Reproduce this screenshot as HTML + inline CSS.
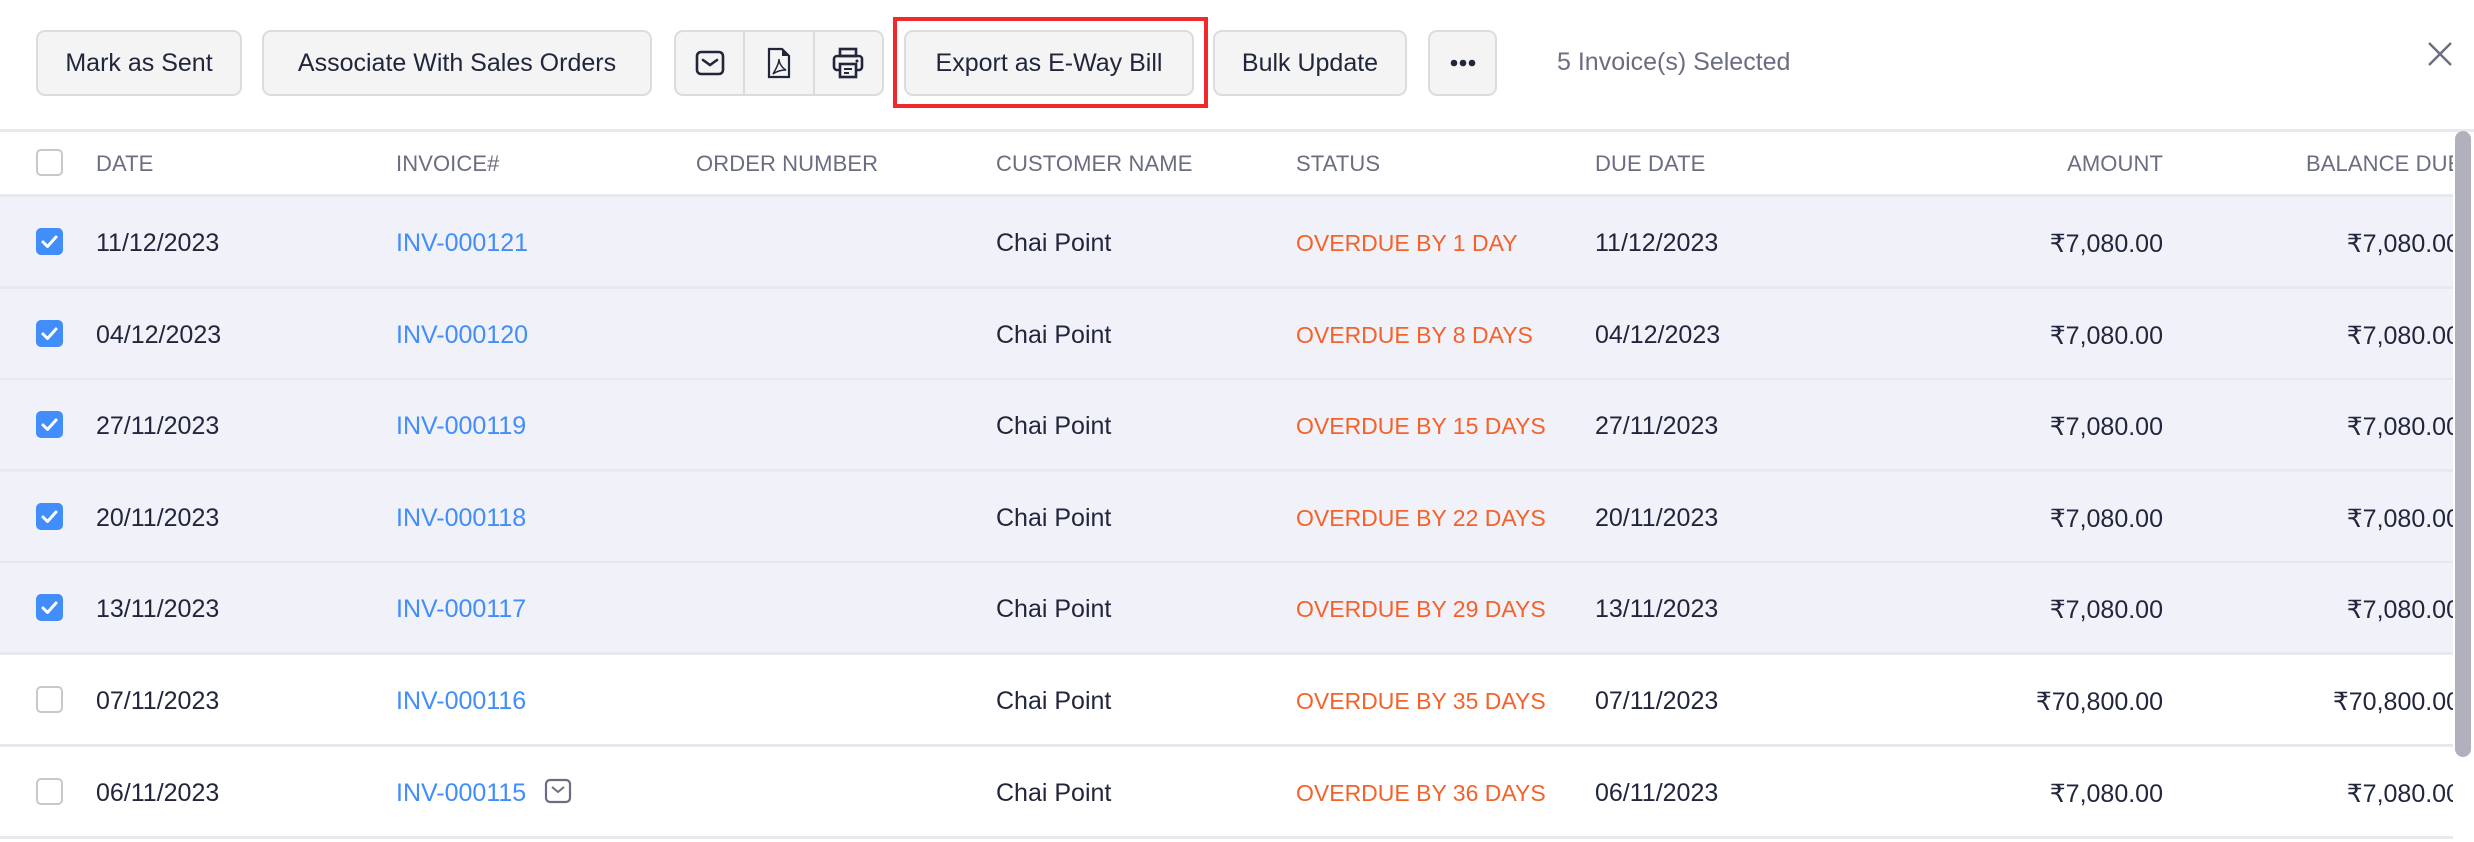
<!DOCTYPE html>
<html><head><meta charset="utf-8"><style>
*{box-sizing:border-box;margin:0;padding:0}
body{width:2474px;height:842px;background:#fff;font-family:"Liberation Sans",Arial,sans-serif;position:relative;overflow:hidden;color:#21263c}
.btn{position:absolute;top:30px;height:66px;background:#f4f4f5;border:2px solid #dcdce0;border-radius:9px;font-size:25px;display:flex;align-items:center;justify-content:center;color:#21263c}
.grp{position:absolute;top:30px;left:674px;width:210px;height:66px;background:#f4f4f5;border:2px solid #dcdce0;border-radius:9px;display:flex}
.grp div{flex:1;display:flex;align-items:center;justify-content:center}
.grp div+div{border-left:2px solid #dcdce0}
.red{position:absolute;left:893px;top:17px;width:315px;height:91px;border:4px solid #f2282b}
.sel{position:absolute;left:1557px;top:48px;font-size:25px;color:#6b6d80}
.wrap{position:absolute;left:0;top:129px;width:2453px;height:713px;overflow:hidden}
.hline{position:absolute;left:0;width:2474px;height:3px;background:#e8e8ee}
.hdr{position:absolute;top:22px;font-size:22px;color:#6b6d80;letter-spacing:.1px}
.row{position:absolute;left:0;width:2474px;height:92px;border-bottom:3px solid #e8e8ee}
.row.s{background:#f0f1f9}
.c{position:absolute;top:32px;font-size:25px;white-space:nowrap}
.cb{position:absolute;left:36px;top:31px;width:27px;height:27px;border:2px solid #c8c8cc;border-radius:5px;background:#fff}
.cb.on{background:#408dfb;border-color:#408dfb}
.lnk{color:#408dfb}
.od{color:#f4622a;font-size:23px;top:33px}
.r{text-align:right}
.sb{position:absolute;left:2455px;top:131px;width:16px;height:626px;background:#b1b1bd;border-radius:8px}
</style></head><body>
<div class="btn" style="left:36px;width:206px">Mark as Sent</div>
<div class="btn" style="left:262px;width:390px">Associate With Sales Orders</div>
<div class="grp">
<div><svg width="30" height="26" viewBox="0 0 30 26"><rect x="2" y="2" width="26" height="22" rx="4" fill="none" stroke="#21263c" stroke-width="2.6"/><path d="M8 10l7 5 7-5" fill="none" stroke="#21263c" stroke-width="2.6" stroke-linecap="round"/></svg></div>
<div><svg width="24" height="32" viewBox="0 0 24 32"><path d="M2 2h13l7 7v21H2z" fill="none" stroke="#21263c" stroke-width="2.2"/><path d="M15 2v7h7z" fill="#21263c"/><path d="M6 27c3-5 6-11 6-15 0 4 3 9 7 11-4 0-9 1-13 4z" fill="none" stroke="#21263c" stroke-width="1.5"/></svg></div>
<div><svg width="32" height="32" viewBox="0 0 32 32"><rect x="8" y="2" width="16" height="7" fill="none" stroke="#21263c" stroke-width="2.6"/><rect x="2" y="9" width="28" height="14" rx="3" fill="none" stroke="#21263c" stroke-width="2.6"/><rect x="8" y="17" width="16" height="13" fill="#f4f4f5" stroke="#21263c" stroke-width="2.6"/><path d="M12 22h8M12 26h5" stroke="#21263c" stroke-width="2"/><circle cx="25" cy="14" r="1.5" fill="#21263c"/></svg></div>
</div>
<div class="btn" style="left:904px;width:290px">Export as E-Way Bill</div>
<div class="red"></div>
<div class="btn" style="left:1213px;width:194px">Bulk Update</div>
<div class="btn" style="left:1428px;width:69px"><svg width="26" height="8" viewBox="0 0 26 8"><circle cx="4" cy="4" r="3.3" fill="#21263c"/><circle cx="13" cy="4" r="3.3" fill="#21263c"/><circle cx="22" cy="4" r="3.3" fill="#21263c"/></svg></div>
<div class="sel">5 Invoice(s) Selected</div>
<svg style="position:absolute;left:2427px;top:41px" width="26" height="26" viewBox="0 0 26 26"><path d="M2 2l22 22M24 2L2 24" stroke="#6b6d80" stroke-width="2.4"/></svg>

<div class="hline" style="top:129px"></div>
<div class="wrap">
<div style="position:absolute;top:0;left:0;width:2474px;height:68px;border-bottom:3px solid #e8e8ee">
<div class="cb" style="top:20px"></div>
<div class="hdr" style="left:96px">DATE</div>
<div class="hdr" style="left:396px">INVOICE#</div>
<div class="hdr" style="left:696px">ORDER NUMBER</div>
<div class="hdr" style="left:996px">CUSTOMER NAME</div>
<div class="hdr" style="left:1296px">STATUS</div>
<div class="hdr" style="left:1595px">DUE DATE</div>
<div class="hdr" style="left:2063px;width:100px;text-align:right">AMOUNT</div>
<div class="hdr" style="left:2306px">BALANCE DUE</div>
</div>
</div>
<div class="wrap" id="rows" style="top:197px;height:645px"></div>
<div class="sb"></div>
<script>
var d=[["11/12/2023","INV-000121","OVERDUE BY 1 DAY","₹7,080.00",1],["04/12/2023","INV-000120","OVERDUE BY 8 DAYS","₹7,080.00",1],["27/11/2023","INV-000119","OVERDUE BY 15 DAYS","₹7,080.00",1],["20/11/2023","INV-000118","OVERDUE BY 22 DAYS","₹7,080.00",1],["13/11/2023","INV-000117","OVERDUE BY 29 DAYS","₹7,080.00",1],["07/11/2023","INV-000116","OVERDUE BY 35 DAYS","₹70,800.00",0],["06/11/2023","INV-000115","OVERDUE BY 36 DAYS","₹7,080.00",0]];
var h="";d.forEach(function(r,i){
var chk=r[4]?'<div class="cb on"><svg width="23" height="23" viewBox="0 0 23 23" style="position:absolute;left:0;top:0"><path d="M5 12l4.5 4.5L18 7" fill="none" stroke="#fff" stroke-width="3" stroke-linecap="round" stroke-linejoin="round"/></svg></div>':'<div class="cb"></div>';
var mail=i==6?'<svg style="position:absolute;left:544px;top:31px" width="28" height="26" viewBox="0 0 28 26"><rect x="2" y="2" width="24" height="22" rx="4" fill="none" stroke="#6b6d80" stroke-width="2.2"/><path d="M8 9l6 5 6-5" fill="none" stroke="#6b6d80" stroke-width="2"/></svg>':'';
h+='<div class="row'+(r[4]?' s':'')+'" style="top:'+(i*91.6)+'px">'+chk+'<div class="c" style="left:96px">'+r[0]+'</div><div class="c lnk" style="left:396px">'+r[1]+'</div>'+mail+'<div class="c" style="left:996px">Chai Point</div><div class="c od" style="left:1296px">'+r[2]+'</div><div class="c" style="left:1595px">'+r[0]+'</div><div class="c r" style="left:1963px;width:200px">'+r[3]+'</div><div class="c r" style="left:2260px;width:200px">'+r[3]+'</div></div>';});
document.getElementById("rows").innerHTML=h;
</script>
</body></html>
